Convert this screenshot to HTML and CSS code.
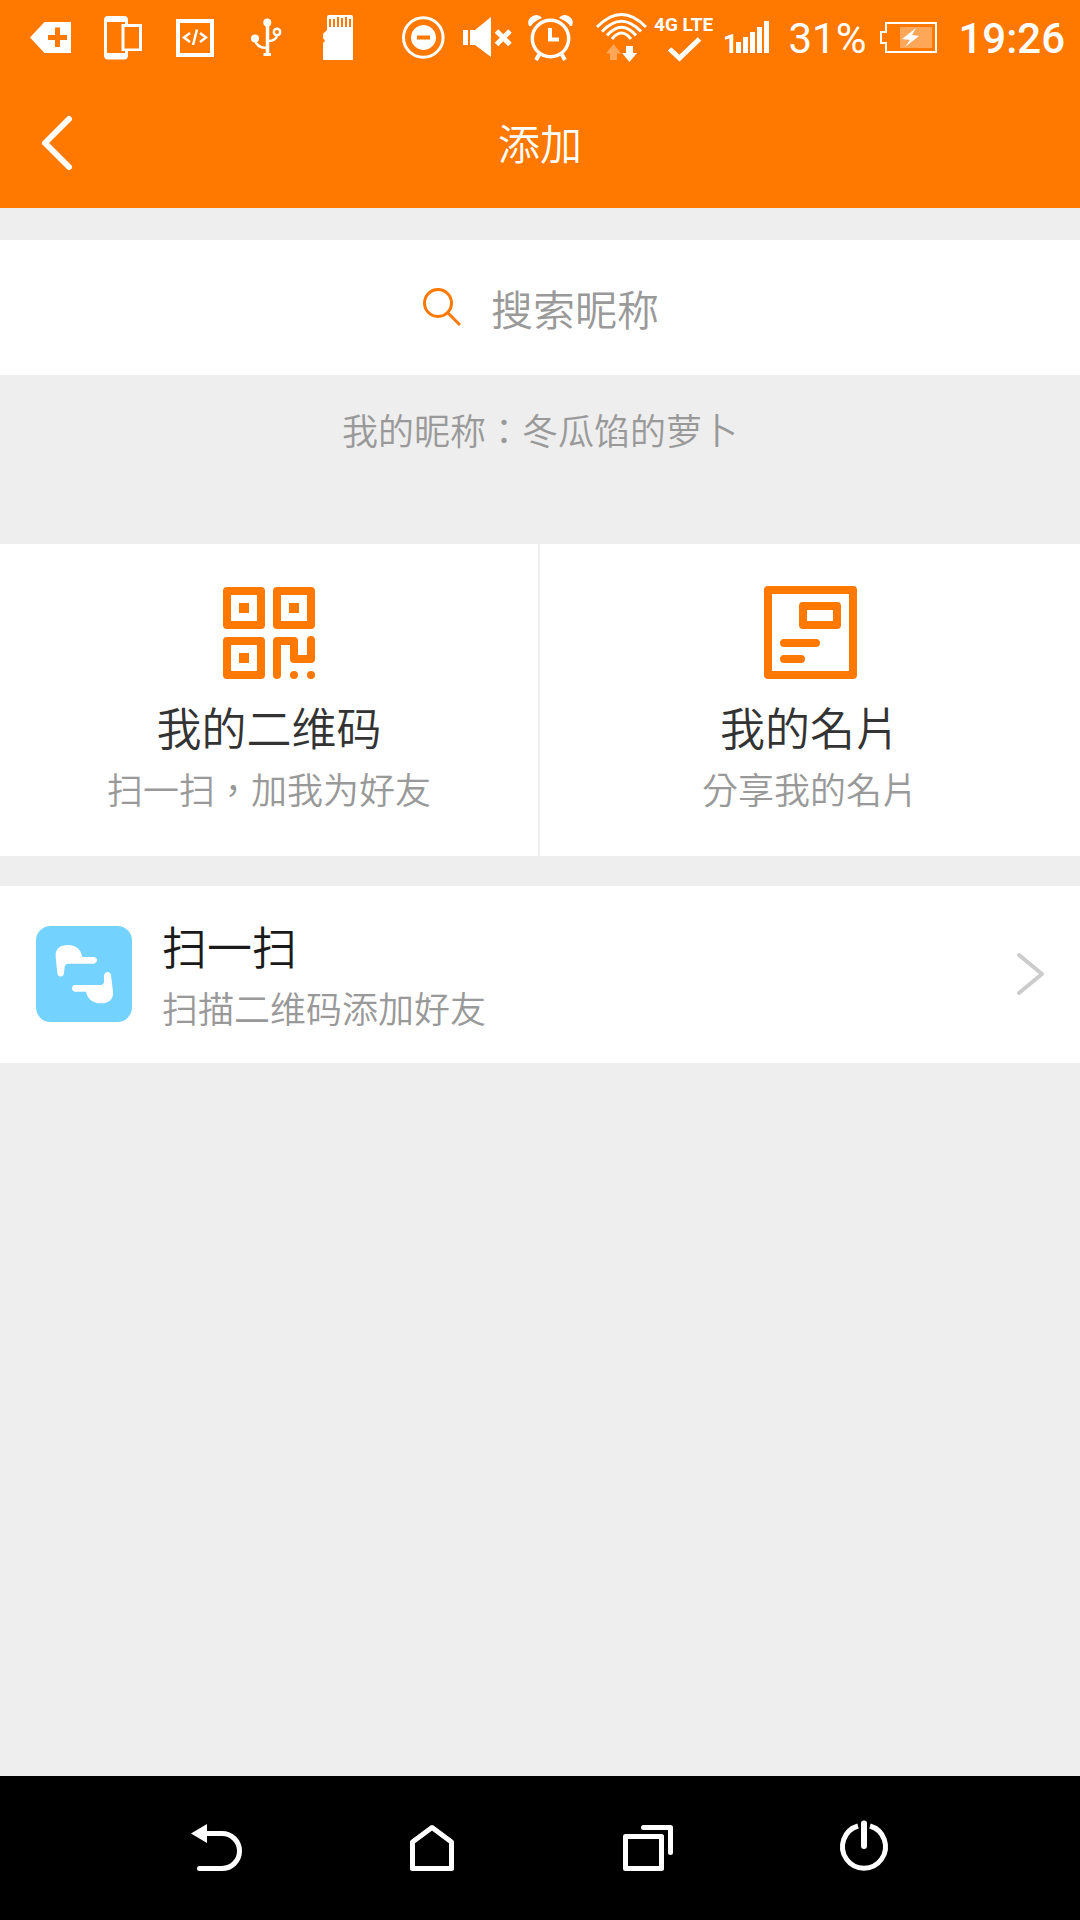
FILE: index.html
```html
<!DOCTYPE html>
<html lang="zh-TW">
<head>
<meta charset="utf-8">
<meta name="viewport" content="width=device-width, initial-scale=1">
<title>添加</title>
<link rel="stylesheet" href="styles.css">
</head>
<body>
<div class="app">
  <div class="status">
    <div class="status-left">
      <svg width="72" height="76" viewBox="14 0 72 76"><path fill="#fff" fill-rule="evenodd" d="M30 37.500L44.500 22H71V53H44.500ZM55 27.500V35H48V40H55V47H60V40H67V35H60V27.500Z"/></svg>
      <svg width="72" height="76" viewBox="86 0 72 76"><path fill="#fff" fill-rule="evenodd" d="M108 16H124Q128 16 128 20V24H142V51H128V55.500Q128 59.500 124 59.500H108Q104 59.500 104 55.500V20Q104 16 108 16ZM107 22V53H125V51H121.500V24H125V22ZM124.500 27V48.500H139V27Z"/></svg>
      <svg width="72" height="76" viewBox="158 0 72 76"><rect x="178" y="21" width="34" height="34" fill="none" stroke="#fff" stroke-width="4"/><path fill="none" stroke="#fff" stroke-width="2.500" d="M190 33L184 37.500L190 42M200 33L206 37.500L200 42M197 29.500L193 45"/></svg>
      <svg width="72" height="76" viewBox="230 0 72 76"><g fill="none" stroke="#fff" stroke-width="2.500"><path stroke-width="3.500" d="M267.500 22V54"/><path d="M255 38C255 44 259 47.500 266 48M277 34C277 39 274 41 268 41"/><circle cx="277" cy="32" r="3.200"/></g><g fill="#fff"><circle cx="267.300" cy="22.500" r="4"/><circle cx="255" cy="38.500" r="4"/><rect x="263.500" y="53" width="7.500" height="3"/></g></svg>
      <svg width="72" height="76" viewBox="302 0 72 76"><path fill="#fff" fill-rule="evenodd" d="M329 15H351Q353 15 353 17V60H324Q323 60 323 59V43L325 41L323 38V34L327 30V17Q327 15 329 15ZM329 19V27H331V19ZM333 19V27H335V19ZM337 17V27H339V17ZM341 18V27H343V18ZM345 17V27H347V17ZM349 19V27H351V19Z"/></svg>
    </div>
    <div class="status-right">
      <svg width="60" height="76" viewBox="394 0 60 76"><circle cx="423.300" cy="37.500" r="19.800" fill="none" stroke="#fff" stroke-width="3"/><path fill="#fff" fill-rule="evenodd" d="M423.500 25A12.500 12.500 0 1 1 423.490 25ZM417 35.500V39.500H430V35.500Z"/></svg>
      <svg width="64" height="76" viewBox="454 0 64 76"><path fill="#fff" d="M463 30H468V45H463ZM470 30H475L491 17V57L475 45H470Z"/><path stroke="#fff" stroke-width="5" d="M496.500 31L510 44.500M510 31L496.500 44.500"/></svg>
      <svg width="66" height="76" viewBox="518 0 66 76"><g fill="none" stroke="#fff" stroke-width="3.500"><circle cx="550.500" cy="38.500" r="18.200"/><path stroke-width="4" d="M540 53L536 60M561 53L565 60M550 28V39.500H559"/></g><path fill="#fff" d="M529 26C526 19 532 15 537 15Q541 16 542 18Q534 21 531 26ZM572 26C575 19 569 15 564 15Q560 16 559 18Q567 21 570 26Z"/></svg>
      <svg width="67" height="76" viewBox="584 0 67 76"><g fill="none" stroke="#fff" stroke-width="3"><path d="M597 27Q621.500 2 646 27M602 31.500Q621.500 11 641 31.500M607 35.500Q621.500 19 636 35.500M612 39Q621.500 27 631 39"/></g><path fill="#fff" opacity=".35" d="M613.500 44L621 53.500H617V60H610V53.500H606Z"/><path fill="#fff" d="M626 46H633V53H637L629.500 62L622 53H626Z"/></svg>
      <svg width="69" height="76" viewBox="651 0 69 76"><text class="network" x="654" y="31">4G LTE</text><path fill="none" stroke="#fff" stroke-width="5" d="M669.500 49L679.500 58L699.500 39"/></svg>
      <svg width="60" height="76" viewBox="720 0 60 76"><path fill="#fff" d="M736 42H741V53H736ZM743 37H748V53H743ZM750 32H755V53H750ZM757 27H762V53H757ZM764 21H769V53H764Z"/><text class="sim" x="723" y="53">1</text></svg>
      <span class="percent">31%</span>
      <svg width="92" height="76" viewBox="865 0 92 76"><path fill="none" stroke="#fff" stroke-width="2" d="M885 23H935V52H885V43H880V32H885Z"/><path fill="#fff" opacity=".35" d="M899 27H931V48H899Z"/><path fill="#fff" d="M915 28L901 39L909 40L904 47L918 36L911 35Z"/></svg>
      <span class="time">19:26</span>
    </div>
  </div>

  <header class="header">
    <button class="back" type="button" aria-label="返回"><svg width="36" height="60" viewBox="39 112 36 60"><path fill="none" stroke="#fff" stroke-width="6" stroke-linecap="round" stroke-linejoin="round" d="M69 119L45 143L69 167"/></svg></button>
    <h1 class="title">添加</h1>
  </header>

  <main class="main">
    <label class="search">
      <svg width="40" height="40" viewBox="421 288 40 40"><g fill="none" stroke="#ff7800" stroke-width="3"><circle cx="438" cy="303" r="13.500"/><path d="M447.500 312.500L460 325"/></g></svg>
      <input class="search-input" type="text" placeholder="搜索昵称" aria-label="搜索昵称">
    </label>
    <p class="nickname">我的昵称：冬瓜馅的萝卜</p>

    <div class="cards">
      <a class="card" href="#qrcode">
        <svg width="94" height="94" viewBox="222 586 94 94"><g fill="none" stroke="#ff7800" stroke-width="8" stroke-linejoin="round" stroke-linecap="round"><path d="M227 591H261V625H227ZM277 591H311V625H277ZM227 641H261V675H227ZM277 675V641H294V659H311V640"/></g><g fill="#ff7800"><path d="M239 603H249V613H239ZM289 603H299V613H289ZM239 653H249V663H239Z"/><circle cx="294" cy="675" r="4"/><circle cx="311" cy="675" r="4"/></g></svg>
        <span class="name">我的二维码</span>
        <span class="desc">扫一扫，加我为好友</span>
      </a>
      <a class="card" href="#card">
        <svg width="94" height="94" viewBox="763 586 94 94"><g fill="none" stroke="#ff7800" stroke-width="8" stroke-linejoin="round" stroke-linecap="round"><path d="M768 590H853V675H768ZM803 606H837V625H803ZM784 643H816M784 659H801"/></g></svg>
        <span class="name">我的名片</span>
        <span class="desc">分享我的名片</span>
      </a>
    </div>

    <a class="scan" href="#scan">
      <svg width="96" height="96" viewBox="0 0 288 288"><rect width="288" height="288" rx="44" fill="#74d2ff"/><path fill="#fff" d="M59 92C57 68 73 57 95 57C120 57 136 71 139 93H173Q183 94 183 103Q182 112 173 113H94Q87 114 86 122L84 142Q82 152 74 152Q66 152 64 142Z"/><path fill="#fff" d="M231 197C233 221 217 232 195 232C170 232 154 218 150 197H117Q108 196 108 187Q108 178 117 177H194Q203 176 204 168V147Q207 138 214 138Q223 138 225 147Z"/></svg>
      <span class="scan-text">
        <span class="name scan-name">扫一扫</span>
        <span class="desc">扫描二维码添加好友</span>
      </span>
      <svg width="32" height="46" viewBox="1014 951 32 46"><path fill="none" stroke="#ccc" stroke-width="4" stroke-linecap="round" stroke-linejoin="round" d="M1019 955L1042 974L1019 993"/></svg>
    </a>
  </main>

  <nav class="nav">
    <button type="button" aria-label="后退"><svg width="60" height="60" viewBox="186 1818 60 60"><path fill="#fff" d="M191 1833.500L207 1824V1843Z"/><path fill="none" stroke="#fff" stroke-width="5" stroke-linecap="round" d="M205 1833.500H222A17.500 17.500 0 0 1 222 1868.500H199.500"/></svg></button>
    <button type="button" aria-label="主页"><svg width="60" height="60" viewBox="402 1818 60 60"><path fill="none" stroke="#fff" stroke-width="5" stroke-linejoin="round" d="M412.500 1868.500V1842L432 1827.500L451.500 1842V1868.500Z"/></svg></button>
    <button type="button" aria-label="最近任务"><svg width="60" height="60" viewBox="618 1818 60 60"><path fill="none" stroke="#fff" stroke-width="5" stroke-linejoin="round" stroke-linecap="round" d="M625.500 1836.500H661.500V1868.500H625.500ZM643.500 1827.500H670.500V1852.500"/></svg></button>
    <button type="button" aria-label="电源"><svg width="60" height="60" viewBox="834 1818 60 60"><g fill="none" stroke="#fff" stroke-width="5"><path d="M870 1826A21.500 21.500 0 1 1 858 1826"/><path stroke-width="6" stroke-linecap="round" d="M864 1823.500V1846"/></g></svg></button>
  </nav>
</div>
</body>
</html>
```

FILE: styles.css
```css
* {
  box-sizing: border-box;
}

body {
  margin: 0;
  background: #eee;
  font-family: "Noto Sans CJK TC", "Noto Sans CJK SC", sans-serif;
  font-weight: 350;
}

svg {
  display: block;
  flex: none;
}

a {
  color: inherit;
  text-decoration: none;
}

button {
  display: flex;
  align-items: center;
  justify-content: center;
  margin: 0;
  padding: 0;
  border: 0;
  background: none;
}

.app {
  display: flex;
  flex-direction: column;
  min-height: 100vh;
}

.status {
  display: flex;
  justify-content: space-between;
  height: 76px;
  padding: 0 15px 0 14px;
  background: #ff7800;
  color: #fff;
  font-family: Roboto, sans-serif;
}

.status-left,
.status-right {
  display: flex;
}

.percent,
.time {
  font-size: 42px;
  line-height: 78px;
}

.percent {
  margin-left: 8px;
  font-weight: 400;
}

.time {
  font-weight: 500;
}

.network {
  fill: #fff;
  font-size: 19px;
  font-weight: 700;
}

.sim {
  fill: #fff;
  font-size: 26px;
  font-weight: 700;
}

.header {
  display: grid;
  grid-template-columns: 114px 1fr 114px;
  align-items: center;
  height: 132px;
  background: #ff7800;
  color: #fff;
}

.back {
  height: 100%;
}

.title {
  margin: 0;
  font-size: 42px;
  font-weight: inherit;
  line-height: 60px;
  text-align: center;
}

.main {
  flex: 1;
  padding-top: 32px;
}

.search {
  display: flex;
  align-items: center;
  justify-content: center;
  gap: 30px;
  height: 135px;
  background: #fff;
}

.search-input {
  width: 4em;
  height: 60px;
  padding: 0;
  border: 0;
  outline: 0;
  background: none;
  color: #333;
  font: inherit;
  font-size: 42px;
}

.search-input::placeholder {
  color: #999;
  opacity: 1;
}

.nickname {
  margin: 0;
  padding: 32px 0 93px;
  color: #999;
  font-size: 36px;
  line-height: 44px;
  text-align: center;
}

.cards {
  display: grid;
  grid-template-columns: 1fr 1fr;
  margin-bottom: 30px;
  background: #fff;
}

.card {
  display: flex;
  flex-direction: column;
  align-items: center;
  padding: 42px 0 46px;
}

.card:first-child {
  border-right: 2px solid #eee;
}

.name {
  color: #333;
  font-size: 45px;
  line-height: 56px;
}

.card .name {
  margin-top: 19px;
}

.desc {
  margin-top: 11px;
  color: #999;
  font-size: 36px;
  line-height: 44px;
}

.scan {
  display: flex;
  align-items: center;
  height: 177px;
  padding: 0 34px 2px 36px;
  background: #fff;
}

.scan-text {
  display: flex;
  flex: 1;
  flex-direction: column;
  margin-left: 30px;
}

.scan .scan-name {
  color: #1a1a1a;
}

.nav {
  display: grid;
  grid-template-columns: repeat(4, 1fr);
  height: 144px;
  padding: 0 10%;
  background: #000;
}
```
